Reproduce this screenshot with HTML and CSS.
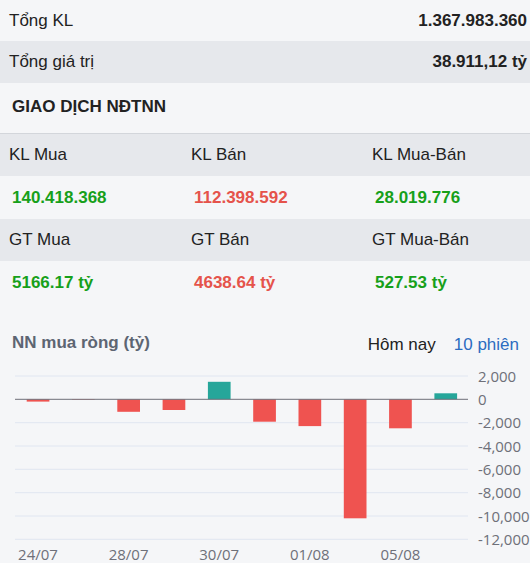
FILE: index.html
```html
<!DOCTYPE html>
<html lang="vi">
<head>
  <meta charset="UTF-8">
  <meta name="viewport" content="width=device-width, initial-scale=1">
  <title>Giao dịch NĐTNN</title>
  <link rel="stylesheet" href="styles.css">
</head>
<body>
  <div class="row first">
    <span>Tổng KL</span>
    <span class="num">1.367.983.360</span>
  </div>
  <div class="row alt">
    <span>Tổng giá trị</span>
    <span class="num">38.911,12 tỷ</span>
  </div>

  <div class="section-title">GIAO DỊCH NĐTNN</div>

  <div class="table">
    <div class="cells head">
      <span>KL Mua</span><span>KL Bán</span><span>KL Mua-Bán</span>
    </div>
    <div class="cells vals">
      <span class="up">140.418.368</span><span class="down">112.398.592</span><span class="up">28.019.776</span>
    </div>
    <div class="cells head">
      <span>GT Mua</span><span>GT Bán</span><span>GT Mua-Bán</span>
    </div>
    <div class="cells vals">
      <span class="up">5166.17 tỷ</span><span class="down">4638.64 tỷ</span><span class="up">527.53 tỷ</span>
    </div>
  </div>

  <div class="chart-head">
    <span class="chart-title">NN mua ròng (tỷ)</span>
    <div class="tabs">
      <span>Hôm nay</span>
      <span class="active">10 phiên</span>
    </div>
  </div>

  <svg class="chart" width="530" height="208" viewBox="0 0 530 208">
    <g class="grid">
      <line x1="15" x2="468" y1="21" y2="21"/>
      <line x1="15" x2="468" y1="67.7" y2="67.7"/>
      <line x1="15" x2="468" y1="91" y2="91"/>
      <line x1="15" x2="468" y1="114.3" y2="114.3"/>
      <line x1="15" x2="468" y1="137.7" y2="137.7"/>
      <line x1="15" x2="468" y1="161" y2="161"/>
      <line x1="15" x2="468" y1="184.3" y2="184.3"/>
    </g>
    <g class="bars">
      <rect class="neg" x="26.7" y="44.3" width="22.7" height="2.3"/>
      <rect class="neg" x="72" y="44.3" width="22.7" height="0.5"/>
      <rect class="neg" x="117.3" y="44.3" width="22.7" height="12.5"/>
      <rect class="neg" x="162.6" y="44.3" width="22.7" height="10.7"/>
      <rect class="pos" x="207.9" y="26.8" width="22.7" height="17.5"/>
      <rect class="neg" x="253.2" y="44.3" width="22.7" height="22.4"/>
      <rect class="neg" x="298.5" y="44.3" width="22.7" height="26.8"/>
      <rect class="neg" x="343.8" y="44.3" width="22.7" height="119"/>
      <rect class="neg" x="389.1" y="44.3" width="22.7" height="29"/>
      <rect class="pos" x="434.4" y="38.3" width="22.7" height="6"/>
    </g>
    <line class="axis" x1="15" x2="468" y1="44.3" y2="44.3"/>
    <g class="ylab">
      <text x="478" y="26.5">2,000</text>
      <text x="478" y="49.8">0</text>
      <text x="478" y="73.2">-2,000</text>
      <text x="478" y="96.5">-4,000</text>
      <text x="478" y="119.8">-6,000</text>
      <text x="478" y="143.2">-8,000</text>
      <text x="478" y="166.5">-10,000</text>
      <text x="478" y="189.8">-12,000</text>
    </g>
    <g class="xlab">
      <text x="38" y="205">24/07</text>
      <text x="128.6" y="205">28/07</text>
      <text x="219.2" y="205">30/07</text>
      <text x="309.8" y="205">01/08</text>
      <text x="400.4" y="205">05/08</text>
    </g>
  </svg>
</body>
</html>
```

FILE: styles.css
```css
:root {
  --page-bg: #f5f6f8;
  --row-alt: #e6e8ec;
  --text: #222;
  --up: #17a01a;
  --down: #e5534b;
  --link: #2b6cc0;
}

body {
  margin: 0;
  width: 530px;
  overflow: hidden;
  background-color: var(--page-bg);
  color: var(--text);
  font-family: "Liberation Sans", Arial, sans-serif;
  font-size: 17px;
}

.row {
  height: 42px;
  display: flex;
  align-items: center;
  justify-content: space-between;
  padding: 0 3px 0 9px;
}

.row.first {
  height: 41px;
}

.row.alt {
  background-color: var(--row-alt);
}

.num {
  font-weight: bold;
}

.section-title {
  height: 50px;
  display: flex;
  align-items: center;
  padding-left: 12px;
  padding-bottom: 3px;
  box-sizing: border-box;
  font-weight: bold;
}

.table {
  border-top: 1px solid #d3d6db;
}

.cells {
  display: grid;
  grid-template-columns: 182px 181px 1fr;
  align-items: center;
  height: 42px;
  padding-left: 9px;
}

.cells.head {
  background-color: var(--row-alt);
}

.cells.vals {
  height: 43px;
  padding-left: 12px;
  font-weight: bold;
}

.up {
  color: var(--up);
}

.down {
  color: var(--down);
}

.chart-head {
  display: flex;
  justify-content: space-between;
  align-items: center;
  height: 24px;
  margin-top: 27px;
  padding: 0 11px 0 12px;
}

.chart-title {
  font-weight: bold;
  color: #5d6572;
}

.tabs {
  display: flex;
  gap: 18px;
  padding-top: 3px;
}

.tabs .active {
  color: var(--link);
}

.chart {
  display: block;
}

.grid line {
  stroke: #e0e6f1;
  stroke-width: 1;
}

.axis {
  stroke: #6e7079;
  stroke-width: 1;
}

.bars .neg {
  fill: #ef5350;
}

.bars .pos {
  fill: #26a69a;
}

.ylab text,
.xlab text {
  font-family: "Open Sans", sans-serif;
  font-size: 15px;
  fill: #6e7079;
}

.xlab text {
  text-anchor: middle;
}
```
